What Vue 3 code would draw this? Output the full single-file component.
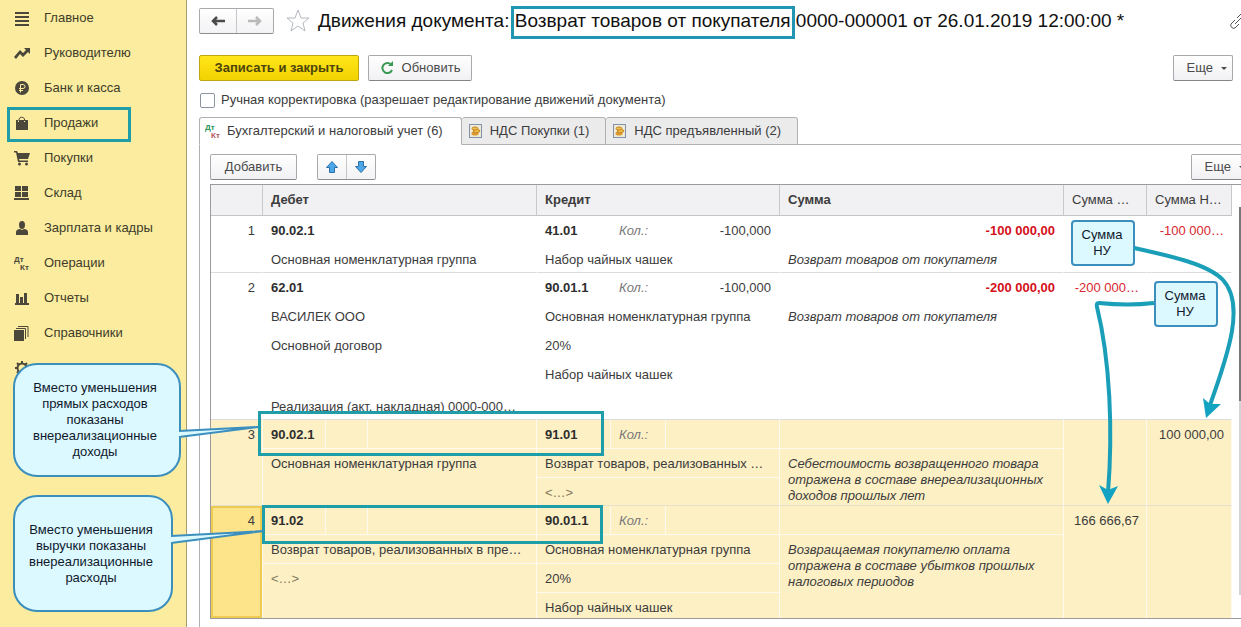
<script setup>
import { ref } from 'vue'

const manual = ref(false)

const sections = [
  { icon: 'menu', label: 'Главное' },
  { icon: 'trend', label: 'Руководителю' },
  { icon: 'ruble', label: 'Банк и касса' },
  { icon: 'bag', label: 'Продажи', marked: true },
  { icon: 'cart', label: 'Покупки' },
  { icon: 'store', label: 'Склад' },
  { icon: 'person', label: 'Зарплата и кадры' },
  { icon: 'dtkt', label: 'Операции' },
  { icon: 'chart', label: 'Отчеты' },
  { icon: 'books', label: 'Справочники' },
  { icon: 'gear', label: 'Администрирование' },
]

const rows = [
  {
    n: 1,
    debit: '90.02.1',
    debitLines: ['Основная номенклатурная группа'],
    credit: '41.01',
    qty: '-100,000',
    creditLines: ['Набор чайных чашек'],
    sum: '-100 000,00',
    note: 'Возврат товаров от покупателя',
    nu1: '',
    nu2: '-100 000…',
  },
  {
    n: 2,
    debit: '62.01',
    debitLines: ['ВАСИЛЕК ООО', 'Основной договор', '', 'Реализация (акт, накладная) 0000-000…'],
    credit: '90.01.1',
    qty: '-100,000',
    creditLines: ['Основная номенклатурная группа', '20%', 'Набор чайных чашек'],
    sum: '-200 000,00',
    note: 'Возврат товаров от покупателя',
    nu1: '-200 000…',
    nu2: '',
    tall: true,
  },
  {
    n: 3,
    debit: '90.02.1',
    debitLines: ['Основная номенклатурная группа'],
    credit: '91.01',
    qty: '',
    creditLines: ['Возврат товаров, реализованных …', '<…>'],
    sum: '',
    note: 'Себестоимость возвращенного товара отражена в составе внереализационных доходов прошлых лет',
    nu1: '',
    nu2: '100 000,00',
    gold: true,
  },
  {
    n: 4,
    debit: '91.02',
    debitLines: ['Возврат товаров, реализованных в пре…', '<…>'],
    credit: '90.01.1',
    qty: '',
    creditLines: ['Основная номенклатурная группа', '20%', 'Набор чайных чашек'],
    sum: '',
    note: 'Возвращаемая покупателю оплата отражена в составе убытков прошлых налоговых периодов',
    nu1: '166 666,67',
    nu2: '',
    gold: true,
    current: true,
  },
]
</script>

<template>
  <div class="app">
    <nav class="side">
      <a v-for="s in sections" :key="s.label" href="#" class="item" :class="{ marked: s.marked }">
        <svg class="ico" viewBox="0 0 16 16" aria-hidden="true">
          <path v-if="s.icon === 'menu'" d="M1 2h14v2H1zM1 6h14v2H1zM1 10h14v2H1zM1 14h14v2H1z" />
          <path v-else-if="s.icon === 'trend'" d="M0 12 6 5l3 3 3-3-2-2h6v6l-2-2-5 5-3-3-4 5z" />
          <template v-else-if="s.icon === 'ruble'">
            <circle cx="8" cy="8" r="7" />
            <path d="M6.5 12.500V4.500H9a2 2 0 0 1 0 4H5M5 10.500h4" class="cut" />
          </template>
          <template v-else-if="s.icon === 'bag'">
            <path d="M2 5h2v2h1V5h5v2h1V5h3v10H2z" />
            <path d="M5 6V4a3 3 0 0 1 5.500 0v2" class="line thin" />
          </template>
          <template v-else-if="s.icon === 'cart'">
            <path d="M0 1h3l1 2h12l-2 6H5l.5 1.500H14V12H4L2 2.500H0z" />
            <circle cx="5.500" cy="14" r="1.500" />
            <circle cx="12.500" cy="14" r="1.500" />
          </template>
          <path v-else-if="s.icon === 'store'" d="M1 1h6v5H1zM8 1h6v5H8zM1 7h6v5H1zM8 7h6v5H8zM0 13h15v2H0z" />
          <template v-else-if="s.icon === 'person'">
            <ellipse cx="8" cy="5" rx="3" ry="4" />
            <path d="M2 15v-3c0-2 2-3 4-3l2 1 2-1c2 0 4 1 4 3v3z" />
          </template>
          <template v-else-if="s.icon === 'dtkt'">
            <text x="0" y="7" class="tiny">Дт</text>
            <text x="6" y="15" class="tiny">Кт</text>
          </template>
          <path v-else-if="s.icon === 'chart'" d="M2 4h3v9h1V7h3v6h1V3h3v10h2v2H1v-2h1z" />
          <template v-else-if="s.icon === 'books'">
            <path d="M0 5h10v11H0z" />
            <path d="M2 3.500h9.500V14M4 1.500h10V12" class="line thin" />
          </template>
          <template v-else>
            <circle cx="8" cy="8" r="4.500" class="line" />
            <path d="M8 1v3M8 12v3M1 8h3M12 8h3M3 3l2 2M11 11l2 2M3 13l2-2M11 5l2-2" class="line" />
          </template>
        </svg>
        <span>{{ s.label }}</span>
      </a>
    </nav>

    <main class="main">
      <header class="head">
        <div class="pair nav">
          <button type="button" aria-label="Назад">
            <svg width="14" height="12" viewBox="0 0 14 12"><path d="M6 2 2 6l4 4M2 6h12" fill="none" stroke="#4a4a4a" stroke-width="2.500" /></svg>
          </button>
          <button type="button" aria-label="Вперед">
            <svg width="14" height="12" viewBox="0 0 14 12"><path d="m8 2 4 4-4 4M12 6H0" fill="none" stroke="#b9b9b9" stroke-width="2.500" /></svg>
          </button>
        </div>
        <svg class="star" width="24" height="24" viewBox="0 0 24 24"><path d="m12 1 3 8h8l-6 5 2 8-7-5-7 5 2-8-6-5h8z" fill="#fff" stroke="#b4b8be" /></svg>
        <h1>Движения документа: <span class="framed">Возврат товаров от покупателя</span> 0000-000001 от 26.01.2019 12:00:00 *</h1>
        <svg class="chain" width="16" height="16" viewBox="0 0 16 16"><path d="m5 11 6-6M7 5l4-4a3 3 0 0 1 4 4l-4 4M9 11l-4 4a3 3 0 0 1-4-4l4-4" fill="none" stroke="#555" /></svg>
      </header>

      <div class="commands">
        <button type="button" class="btn primary">Записать и закрыть</button>
        <button type="button" class="btn refresh">
          <svg width="14" height="14" viewBox="0 0 14 14"><path d="M11 3.500A5 5 0 1 0 12 9" fill="none" stroke="#3a9a55" stroke-width="2" /><path d="M8 5h5V0z" fill="#3a9a55" /></svg>
          Обновить
        </button>
        <button type="button" class="btn more">Еще <i class="caret"></i></button>
      </div>

      <label class="manual">
        <input v-model="manual" type="checkbox" />
        <span>Ручная корректировка (разрешает редактирование движений документа)</span>
      </label>

      <div class="tabs" role="tablist">
        <button type="button" role="tab" class="tab active" aria-selected="true">
          <svg width="18" height="18" viewBox="0 0 18 18"><text x="0" y="8" class="tiny" fill="#2c9458">Дт</text><text x="6" y="16" class="tiny" fill="#b5585a">Кт</text></svg>
          Бухгалтерский и налоговый учет (6)
        </button>
        <button v-for="t in ['НДС Покупки (1)', 'НДС предъявленный (2)']" :key="t" type="button" role="tab" class="tab" aria-selected="false">
          <svg width="14" height="14" viewBox="0 0 14 14">
            <rect x=".5" y=".5" width="12" height="13" fill="#efe9d8" stroke="#8292a8" />
            <ellipse cx="6" cy="9.500" rx="3.500" ry="2" fill="#d9972c" />
            <ellipse cx="7.500" cy="7" rx="3.500" ry="1.500" fill="#f3c24d" stroke="#c48424" />
            <ellipse cx="6" cy="4.500" rx="3" ry="1.500" fill="#f3c24d" stroke="#c48424" />
          </svg>
          {{ t }}
        </button>
      </div>

      <section class="panel">
        <div class="tools">
          <button type="button" class="btn add">Добавить</button>
          <div class="pair move">
            <button type="button" aria-label="Переместить вверх">
              <svg width="12" height="12" viewBox="0 0 12 12"><path d="m6 .5 5.500 6H8.500v5h-5v-5h-3z" fill="#4ba7e8" stroke="#2f6fa8" /></svg>
            </button>
            <button type="button" aria-label="Переместить вниз">
              <svg width="12" height="12" viewBox="0 0 12 12"><path d="m6 11.500 5.500-6H8.500v-5h-5v5h-3z" fill="#4ba7e8" stroke="#2f6fa8" /></svg>
            </button>
          </div>
          <button type="button" class="btn more cropped">Еще <i class="caret"></i></button>
        </div>

        <div class="sheet">
          <table>
            <colgroup>
              <col class="c-n" /><col class="c-d" /><col class="c-c" /><col /><col class="c-1" /><col class="c-2" />
            </colgroup>
            <thead>
              <tr>
                <th></th>
                <th>Дебет</th>
                <th>Кредит</th>
                <th>Сумма</th>
                <th class="light">Сумма …</th>
                <th class="light">Сумма Н…</th>
              </tr>
            </thead>
            <tbody>
              <tr v-for="r in rows" :key="r.n" :class="{ gold: r.gold, current: r.current, tall: r.tall }">
                <td class="num"><div class="ln">{{ r.n }}</div></td>
                <td>
                  <div class="acc debit"><b>{{ r.debit }}</b><span></span><span></span></div>
                  <div v-for="(l, i) in r.debitLines" :key="i" class="ln" :class="{ hint: l === '<…>' }">{{ l }}</div>
                </td>
                <td>
                  <div class="acc credit"><b>{{ r.credit }}</b><em>Кол.:</em><span>{{ r.qty }}</span></div>
                  <div v-for="(l, i) in r.creditLines" :key="i" class="ln" :class="{ hint: l === '<…>' }">{{ l }}</div>
                </td>
                <td>
                  <div class="ln total">{{ r.sum }}</div>
                  <p class="note">{{ r.note }}</p>
                </td>
                <td><div class="ln amount" :class="{ neg: r.nu1[0] === '-' }">{{ r.nu1 }}</div></td>
                <td><div class="ln amount" :class="{ neg: r.nu2[0] === '-' }">{{ r.nu2 }}</div></td>
              </tr>
            </tbody>
          </table>
          <div class="scroll"><i></i></div>
        </div>
      </section>
    </main>

    <div class="mark mark-a"></div>
    <div class="mark mark-b"></div>
    <div class="bubble bubble-a"><span>Вместо уменьшения<br />прямых расходов<br />показаны<br />внереализационные<br />доходы</span></div>
    <div class="bubble bubble-b"><span>Вместо уменьшения<br />выручки показаны<br />внереализационные<br />расходы</span></div>
    <div class="tag tag-a">Сумма<br />НУ</div>
    <div class="tag tag-b">Сумма<br />НУ</div>
    <svg class="ink" width="1241" height="627" viewBox="0 0 1241 627" aria-hidden="true">
      <g fill="#dbf9ff" stroke="#3c8fbd" stroke-width="2">
        <path d="M179 431 258 427 179 437" />
        <path d="M171 536 264 531 171 543" />
      </g>
      <path d="M178 432h3v4h-3zM170 537h3v5h-3z" fill="#dbf9ff" />
      <g fill="none" stroke="#1b9fb9" stroke-width="4">
        <path d="M1134 248C1170 256 1208 264 1223 280C1245 304 1229 352 1210 405" />
        <path d="M1154 303Q1128 306 1099 303Q1096 303 1097 307C1110 360 1113 430 1108 493" stroke-linejoin="round" />
      </g>
      <path d="m1206 418-3-20 7 6 11 0zM1108 504l-9-19 9 5 10-4z" fill="#12a3c2" />
    </svg>
  </div>
</template>

<style>
body {
  margin: 0;
  overflow: hidden;
  background: #fff;
}
</style>

<style scoped>
.app {
  position: relative;
  display: flex;
  min-height: 100vh;
  overflow: hidden;
  font-family: "Liberation Sans", Arial, sans-serif;
  font-size: 13px;
  line-height: 16px;
  color: #3c3c3c;
}
.app * {
  box-sizing: border-box;
}
button {
  font: inherit;
  color: inherit;
  padding: 0;
  margin: 0;
}
.side {
  flex: none;
  width: 187px;
  background: #fbec9f;
  border-right: 1px solid #a39b72;
}
.item {
  position: relative;
  display: flex;
  align-items: center;
  gap: 14px;
  height: 35px;
  padding-left: 14px;
  color: #403c2a;
  text-decoration: none;
}
.marked::after {
  content: "";
  position: absolute;
  inset: 2px 55px -2px 7px;
  border: 3px solid #1f9da8;
}
.ico {
  width: 16px;
  height: 16px;
  fill: #4b473a;
}
.ico .line {
  fill: none;
  stroke: #4b473a;
  stroke-width: 2;
}
.ico .thin {
  stroke-width: 1;
}
.ico .cut {
  fill: none;
  stroke: #fbec9f;
}
.tiny {
  font-size: 8px;
  font-weight: bold;
}
.main {
  flex: 1;
  min-width: 0;
  display: flex;
  flex-direction: column;
  padding-left: 12px;
}
.head {
  display: flex;
  align-items: center;
  height: 41px;
}
h1 {
  flex: 1;
  margin: 0;
  font-size: 19px;
  line-height: 24px;
  font-weight: normal;
  color: #111;
  white-space: nowrap;
}
.framed {
  position: relative;
}
.framed::after {
  content: "";
  position: absolute;
  inset: -4px -4px -8px -4px;
  border: 3px solid #2196b3;
}
.star {
  margin: 0 8px 0 12px;
}
.chain {
  margin-right: -5px;
}
.pair {
  display: flex;
  border: 1px solid #a9a9ad;
  border-bottom-color: #8d8d92;
  border-radius: 2px;
  background: linear-gradient(#fff, #f3f2f4);
}
.pair button {
  display: flex;
  align-items: center;
  justify-content: center;
  flex: 1;
  border: 0;
  background: none;
}
.pair button + button {
  border-left: 1px solid #c6c6ca;
}
.nav {
  width: 75px;
  height: 26px;
}
.commands {
  display: flex;
  gap: 9px;
  margin: 14px 8px 11px 0;
}
.btn {
  height: 26px;
  border: 1px solid #a9a9ad;
  border-bottom-color: #85858a;
  border-radius: 2px;
  background: linear-gradient(#fff, #f1f0f3);
  color: #4a4a4a;
}
.primary {
  width: 160px;
  font-weight: bold;
  color: #4c440c;
  background: linear-gradient(#ffe61a, #f2d200);
  border-color: #bfa60e;
}
.refresh {
  display: flex;
  align-items: center;
  justify-content: center;
  gap: 8px;
  width: 104px;
}
.more {
  display: flex;
  align-items: center;
  justify-content: flex-end;
  gap: 8px;
  width: 60px;
  padding-right: 5px;
  margin-left: auto;
}
.caret {
  border: 3px solid transparent;
  border-top-color: #4a4a4a;
  border-bottom: 0;
}
.cropped {
  margin-right: -10px;
}
.manual {
  display: flex;
  align-items: center;
  gap: 6px;
  height: 16px;
  margin-bottom: 9px;
}
.manual input {
  appearance: none;
  width: 15px;
  height: 15px;
  margin: 0 0 0 1px;
  border: 1px solid #8d93a0;
  border-radius: 2px;
  background: #fff;
}
.tabs {
  display: flex;
  height: 28px;
  border-bottom: 1px solid #b0b0b4;
}
.tab {
  display: flex;
  align-items: center;
  gap: 7px;
  height: 28px;
  padding: 0 16px 0 7px;
  border: 1px solid #b0b0b4;
  border-left: 0;
  border-radius: 3px 3px 0 0;
  background: #ebebec;
  white-space: nowrap;
}
.tab.active {
  gap: 4px;
  padding: 0 18px 0 5px;
  border-left: 1px solid #b0b0b4;
  border-bottom-color: #fff;
  background: #fff;
}
.panel {
  flex: 1;
  padding-left: 10px;
  border-left: 1px solid #b0b0b4;
}
.tools {
  display: flex;
  padding: 9px 0 4px;
}
.add {
  width: 87px;
}
.move {
  width: 59px;
  margin-left: 20px;
}
.sheet {
  display: flex;
  justify-content: space-between;
  border: 1px solid #9b9b9f;
  border-right: 0;
}
table {
  flex: 1;
  width: 100%;
  margin-right: 7px;
  table-layout: fixed;
  border-spacing: 0;
}
.c-n { width: 52px; }
.c-d { width: 274px; }
.c-c { width: 243px; }
.c-1 { width: 83px; }
.c-2 { width: 85px; }
th {
  height: 31px;
  padding: 0 8px;
  text-align: left;
  background: #f1f0f2;
  border-right: 1px solid #c9c8cb;
  border-bottom: 1px solid #c4c3c6;
}
.light {
  font-weight: normal;
  white-space: nowrap;
}
td {
  padding: 0;
  vertical-align: top;
  border-right: 1px solid transparent;
  border-bottom: 1px solid #dcdcdc;
}
.ln,
.acc {
  height: 29px;
  line-height: 30px;
  padding: 0 8px;
  border-bottom: 1px solid transparent;
  white-space: nowrap;
}
.ln:last-child {
  height: 27px;
  border-bottom: 0;
}
.tall td:nth-child(2) .ln:last-child {
  height: 30px;
  line-height: 36px;
}
.acc {
  display: grid;
  padding: 0;
}
.acc > * {
  height: 28px;
  padding: 0 8px;
  border-right: 1px solid transparent;
}
.acc > :last-child {
  border-right: 0;
  text-align: right;
}
.debit {
  grid-template-columns: 63px 42px 1fr;
}
.credit {
  grid-template-columns: 74px 55px 1fr;
}
b {
  color: #2e2e2e;
}
em {
  color: #777;
}
.num {
  text-align: right;
}
.num .ln {
  padding-right: 7px;
}
.total {
  text-align: right;
  font-weight: bold;
  color: #d4101a;
}
.note {
  margin: 0;
  padding: 7px 8px 0;
  font-style: italic;
}
.amount {
  text-align: right;
  padding: 0 7px 0 0;
}
.neg {
  color: #d8262e;
}
.hint {
  color: #82795c;
}
.gold td {
  background: #fdf0c5;
  border-right-color: #fffaf0;
  border-bottom-color: #e6dfcc;
}
.gold .acc,
.gold .total,
.gold td:nth-child(2) .ln:not(:last-child),
.gold td:nth-child(3) .ln:not(:last-child) {
  border-bottom-color: #fffaf0;
}
.gold .acc > :not(:last-child) {
  border-right-color: #fffaf0;
}
.current td {
  height: 112px;
  border-bottom: 0;
}
.current .ln:last-child {
  height: 25px;
}
.current .num {
  background: #fde48b;
  box-shadow: inset 0 0 0 2px #eccb50;
}
.scroll {
  flex: none;
  width: 2px;
  padding-top: 22px;
}
.scroll i {
  display: block;
  height: 388px;
  background: linear-gradient(#77777a 50%, #d4d4d6 50%);
}
.mark {
  position: absolute;
  border: 3px solid #1f9da8;
}
.mark-a {
  left: 258px;
  top: 411px;
  width: 346px;
  height: 45px;
}
.mark-b {
  left: 262px;
  top: 505px;
  width: 341px;
  height: 39px;
}
.bubble,
.tag {
  position: absolute;
  display: flex;
  align-items: center;
  justify-content: center;
  text-align: center;
  color: #10182c;
  background: #dbf9ff;
  border: 2px solid #3c8fbd;
}
.bubble {
  left: 13px;
  border-radius: 24px;
}
.bubble-a {
  top: 363px;
  width: 168px;
  height: 114px;
  padding-right: 4px;
}
.bubble-b {
  top: 495px;
  width: 160px;
  height: 117px;
  padding-right: 4px;
}
.tag {
  width: 64px;
  height: 46px;
  padding-right: 2px;
  border-radius: 4px;
}
.tag-a {
  left: 1071px;
  top: 220px;
}
.tag-b {
  left: 1154px;
  top: 281px;
}
.ink {
  position: absolute;
  left: 0;
  top: 0;
  pointer-events: none;
}
</style>
